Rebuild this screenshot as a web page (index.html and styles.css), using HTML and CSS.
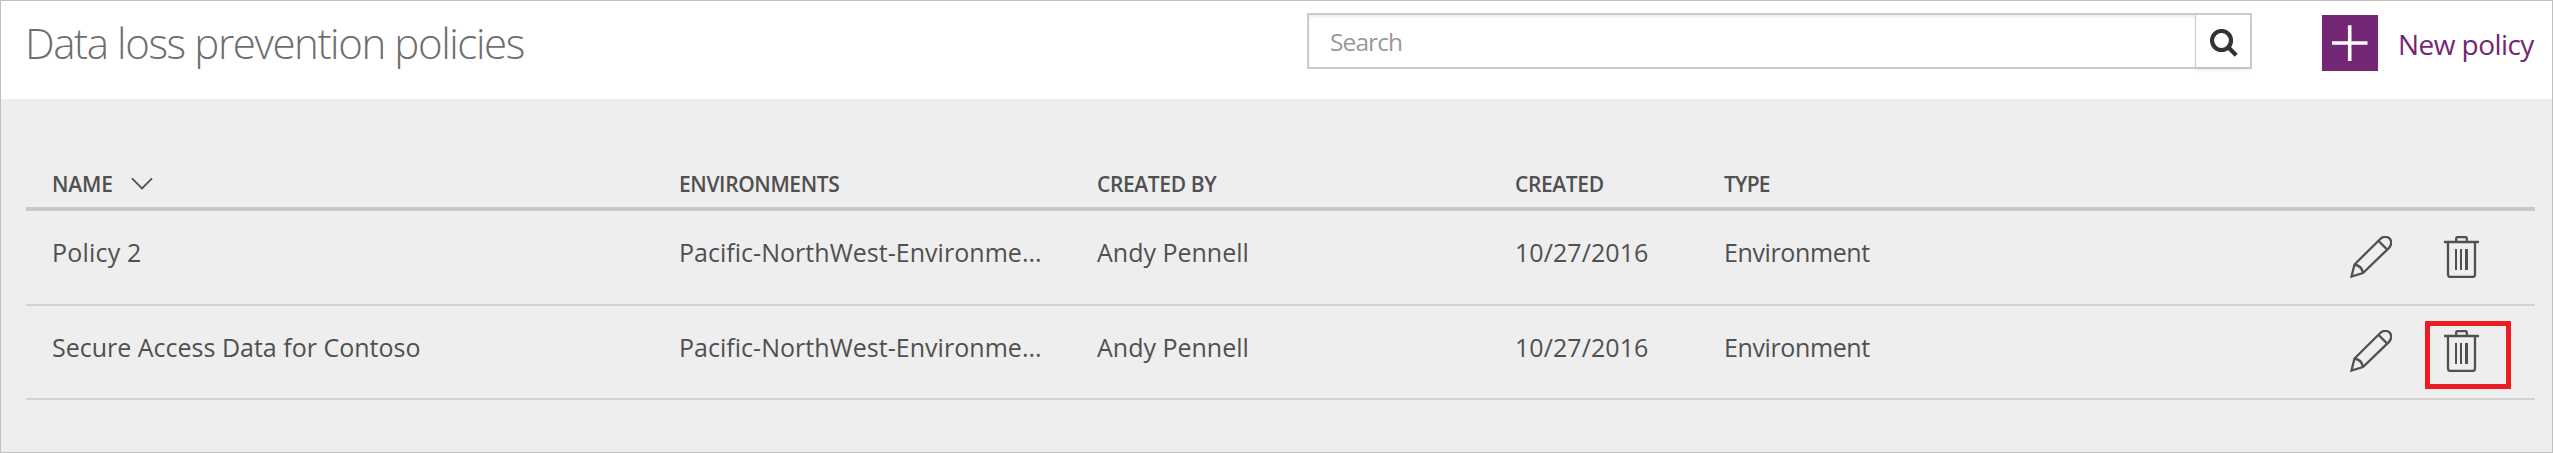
FILE: index.html
```html
<!DOCTYPE html>
<html lang="en">
<head>
<meta charset="utf-8">
<title>Data loss prevention policies</title>
<link rel="stylesheet" href="styles.css">
</head>
<body>
<svg class="sprite" aria-hidden="true">
  <symbol id="pencil" viewBox="0 0 42 42">
    <path d="M1.5 40.5 4.5 28.5 30 3.2C33 .2 37.5 .3 39.7 2.6 42 5 41.6 9.3 38.8 12.1L13 37Z M28.4 4.8 37.2 13.6 M4.5 28.5C9 29.3 12.3 32.6 13 37"/>
  </symbol>
  <symbol id="trash" viewBox="0 0 36 42">
    <path d="M0 6H35 M12.2 5.5V2.4Q12.2 1.2 13.4 1.2H21.6Q22.8 1.2 22.8 2.4V5.5 M4 6.5V38.5Q4 41 6.5 41H28.5Q31 41 31 38.5V6.5"/>
    <path class="bars" d="M11 13h2v21h-2z M16 13h2v21h-2z M21 13h3v21h-3z"/>
  </symbol>
</svg>
<header class="topbar">
  <h1 class="title">Data loss prevention policies</h1>
  <div class="search">
    <input class="search-input" type="text" placeholder="Search" aria-label="Search">
    <button class="search-button" aria-label="Search">
      <svg class="icon-search" viewBox="0 0 28 28"><circle cx="11.5" cy="11.5" r="9.5"/><path d="M18 18 26.2 26.2"/></svg>
    </button>
  </div>
  <a class="new-policy">
    <span class="plus"><svg class="icon-plus" viewBox="0 0 36 36"><path d="M0 18H35.5M17.7 .2V36"/></svg></span>
    <span class="new-label">New policy</span>
  </a>
</header>
<main class="content">
  <div class="row head">
    <div class="name-head"><span class="h-name">NAME</span><svg class="icon-chevron" viewBox="0 0 22 13"><path d="M1 1.3 11 11.5 21 1.3"/></svg></div>
    <div>ENVIRONMENTS</div>
    <div>CREATED BY</div>
    <div>CREATED</div>
    <div class="h-type">TYPE</div>
  </div>
  <div class="row item first">
    <div class="short">Policy 2</div>
    <div class="env">Pacific-NorthWest-Environme...</div>
    <div>Andy Pennell</div>
    <div class="date">10/27/2016</div>
    <div class="type">Environment</div>
    <div class="actions">
      <svg class="icon pencil"><use href="#pencil"/></svg>
      <span class="delete"><svg class="icon trash"><use href="#trash"/></svg></span>
    </div>
  </div>
  <div class="row item">
    <div>Secure Access Data for Contoso</div>
    <div class="env">Pacific-NorthWest-Environme...</div>
    <div>Andy Pennell</div>
    <div class="date">10/27/2016</div>
    <div class="type">Environment</div>
    <div class="actions">
      <svg class="icon pencil"><use href="#pencil"/></svg>
      <span class="delete marked"><svg class="icon trash"><use href="#trash"/></svg></span>
    </div>
  </div>
</main>
</body>
</html>
```
FILE: styles.css
```css
*, *::after { box-sizing: border-box; }

body {
  margin: 0;
  height: 453px;
  overflow: hidden;
  display: flex;
  flex-direction: column;
  border: 1px solid #bfbfbf;
  background: #eee;
  color: #505050;
  font-family: "Open Sans", "Noto Sans", sans-serif;
}

.sprite { position: absolute; width: 0; height: 0; }
svg { display: block; fill: none; }

.topbar {
  height: 98px;
  display: flex;
  align-items: flex-start;
  padding: 12px 16px 0 24px;
  background: #fff;
}

.title {
  flex: 1;
  margin: 2px 0 0;
  font-size: 42px;
  font-weight: 300;
  line-height: 56px;
  letter-spacing: -1.4px;
  color: #6e6e6e;
}

.search {
  width: 945px;
  height: 56px;
  display: flex;
  margin-right: 70px;
  border: 2px solid #ccc;
}

.search-input {
  flex: 1;
  padding: 0 0 0 21px;
  border: 0;
  background: #fff;
  box-shadow: inset 0 2px 3px rgba(0, 0, 0, .08);
  font: 400 24.5px "Open Sans", "Noto Sans", sans-serif;
  letter-spacing: -.9px;
}
.search-input::placeholder { color: #999; opacity: 1; }

.search-button {
  width: 55px;
  display: flex;
  align-items: center;
  padding: 0 0 0 14px;
  border: 0;
  border-left: 1px solid #ccc;
  background: #fff;
  box-shadow: 0 5px 3px -1px rgba(0, 0, 0, .05);
}

.icon-search { width: 28px; height: 28px; stroke: #333; stroke-width: 4.2; margin-bottom: -4px; }

.new-policy { display: flex; width: 214px; margin-top: 2px; color: #742774; }
.plus { width: 56px; height: 56px; display: flex; padding: 10px; background: #742774; }
.icon-plus { width: 36px; height: 36px; stroke: #fff; stroke-width: 3.6; }
.new-label {
  margin-left: 20px;
  font-size: 28px;
  line-height: 58px;
  letter-spacing: -.55px;
  white-space: nowrap;
}

.content { padding: 0 17px 0 25px; }

.row {
  display: grid;
  grid-template-columns: 627px 418px 418px 209px 1fr auto;
  padding-left: 26px;
  white-space: nowrap;
}

.head {
  height: 112px;
  padding-top: 72px;
  border-bottom: 4px solid #c8c8c8;
  font-size: 21px;
  font-weight: 600;
  line-height: 26px;
  letter-spacing: -.38px;
}
.name-head { display: flex; align-items: flex-start; }
.h-name { width: 79px; letter-spacing: -.15px; }
.h-type { letter-spacing: -.8px; }
.icon-chevron { width: 22px; height: 13px; margin-top: 6px; stroke: #505050; stroke-width: 1.8; }

.item {
  height: 94px;
  padding-top: 24px;
  border-bottom: 2px solid #d2d2d2;
  font-size: 25px;
  line-height: 34px;
}
.first { height: 95px; }
.short { letter-spacing: .2px; }
.env { letter-spacing: .03px; }
.date { letter-spacing: .07px; }
.type { letter-spacing: -.38px; }

.actions { display: flex; align-items: flex-end; padding: 0 24px 26px 0; }
.icon { height: 42px; stroke: #505050; stroke-width: 2.3; }
.pencil { width: 42px; margin-right: 33px; }
.trash { width: 36px; }
.bars { fill: #505050; stroke: none; }

.delete { position: relative; width: 86px; padding-left: 19px; }
.marked::after {
  content: "";
  position: absolute;
  left: 0;
  bottom: -17px;
  width: 86px;
  height: 68px;
  border: 5px solid #ed1c24;
}
```
